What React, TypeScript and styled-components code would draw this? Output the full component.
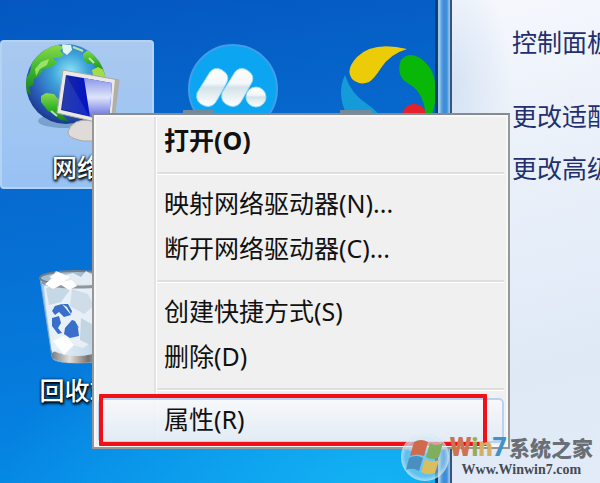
import React from "react";
import styled, { createGlobalStyle } from "styled-components";

const GlobalStyle = createGlobalStyle`
  *, *::before, *::after { box-sizing: border-box; }
  body {
    margin: 0;
    font-family: "Noto Sans", "Noto Sans CJK SC", sans-serif;
  }
`;

const Screen = styled.main`
  position: relative;
  display: grid;
  grid-template-columns: minmax(0, 435fr) 17px minmax(0, 148fr);
  min-height: 100vh;
  overflow: hidden;
`;

const Desktop = styled.section`
  display: grid;
  grid-template-columns: repeat(3, 155px);
  grid-auto-rows: 149px;
  row-gap: 74px;
  align-content: start;
  padding-top: 40px;
  overflow: hidden;
  background:
    radial-gradient(ellipse 380px 190px at 88% 100%, rgba(22, 185, 246, 0.85), rgba(10, 150, 235, 0) 100%),
    linear-gradient(172deg, #0457c0 0%, #0665ca 24%, #0672d6 52%, #0580e0 78%, #0591ea 100%);
`;

const DesktopIcon = styled.button<{ $selected?: boolean }>`
  display: flex;
  flex-direction: column;
  align-items: center;
  width: 154px;
  height: 149px;
  padding: 0;
  border: 2px solid ${(p) => (p.$selected ? "#b4d2f4" : "transparent")};
  border-radius: 4px;
  background: ${(p) => (p.$selected ? "linear-gradient(#a9c9ef, #98c2f4)" : "none")};
`;

const IconArt = styled.svg`
  display: block;
  flex: none;
  width: 150px;
  height: 108px;
`;

const IconLabel = styled.span`
  font: 500 25px/32px "Noto Sans CJK SC", sans-serif;
  color: #fff;
  text-shadow: 0 1px 2px #000, 1px 2px 3px #000, 0 0 3px #001c40;
`;

const Frame = styled.div`
  border-left: 3px solid #10406e;
  border-right: 2px solid #36547c;
  background: linear-gradient(90deg, #9cc8ee 0 2px, #5fa6e2 3px, #3b8bd8 6px, #4291dc 9px, #8fbfea 11px);
`;

const SidePane = styled.nav`
  display: flex;
  flex-direction: column;
  padding: 24px 0 0 60px;
  overflow: hidden;
  background:
    radial-gradient(ellipse 60px 130px at 0 90px, rgba(206, 222, 242, 0.8), transparent),
    linear-gradient(165deg, #f6f8fd 0%, #edf2fa 25%, #e6eef9 50%, #dfe9f6 75%, #e2ebf7 100%);
`;

const TaskLink = styled.a<{ $first?: boolean }>`
  margin-bottom: ${(p) => (p.$first ? "38px" : "16px")};
  font-size: 25px;
  line-height: 36px;
  white-space: nowrap;
  text-decoration: none;
  color: #232f6e;
`;

const Menu = styled.div`
  position: absolute;
  top: 113px;
  left: 92px;
  width: 418px;
  padding: 4px;
  border: 2px solid #979797;
  border-top-color: #858b90;
  background: linear-gradient(90deg, transparent 60px, #e2e3e3 60px 62px, #fff 62px 63px, transparent 63px) #f0f0f0;
  box-shadow: inset 0 0 0 2px #f8f8f8;
`;

const MenuItem = styled.button<{ $bold?: boolean; $active?: boolean }>`
  display: block;
  width: 100%;
  height: 45px;
  padding: 0 0 4px 66px;
  border: 0;
  border-radius: 5px;
  text-align: left;
  font-family: inherit;
  font-size: 25px;
  line-height: 40px;
  font-weight: ${(p) => (p.$bold ? 700 : 400)};
  color: #111;
  background: ${(p) => (p.$active ? "linear-gradient(rgba(248,250,252,.9), rgba(222,233,245,.8))" : "none")};
  box-shadow: ${(p) => (p.$active ? "inset 0 0 0 2px #b9d2ef" : "none")};
`;

const Divider = styled.hr`
  height: 3px;
  margin: 8px 0 7px 59px;
  border: 0;
  border-top: 2px solid #dfdfdf;
  background: #fff;
`;

const ActiveRow = styled.div`
  position: relative;
`;

const RedMark = styled.div`
  position: absolute;
  inset: -4px 17px -3px 1px;
  border: 4px solid #f10f18;
  border-radius: 1px;
  pointer-events: none;
`;

const Watermark = styled.div`
  position: absolute;
  right: 7px;
  bottom: 1px;
  display: flex;
  align-items: center;
`;

const Orb = styled.svg`
  width: 50px;
  height: 50px;
`;

const BrandText = styled.div`
  display: flex;
  flex-direction: column;
  align-items: center;
`;

const BrandName = styled.div`
  display: flex;
  align-items: center;
  font: 900 21px/24px "Noto Sans CJK SC", sans-serif;
  color: #6a6f76;
`;

const Win = styled.b`
  font: 900 25px/24px Roboto, sans-serif;
  margin-right: 2px;
  padding-top: 2px;
`;

const Tint = styled.span<{ $color: string }>`
  color: ${(p) => p.$color};
`;

const BrandUrl = styled.div`
  font: 700 14px/20px "Liberation Serif", serif;
  color: #454b55;
`;

const NetworkArt = () => (
  <IconArt viewBox="3 42 150 108" aria-hidden="true">
    <defs>
      <radialGradient id="sea" cx="55%" cy="35%" r="65%">
        <stop offset="0" stopColor="#8ce6f6" />
        <stop offset=".35" stopColor="#3ea2da" />
        <stop offset=".75" stopColor="#2a5cb8" />
        <stop offset="1" stopColor="#1a3a90" />
      </radialGradient>
      <linearGradient id="land" x1="0" y1="0" x2="0" y2="1">
        <stop offset="0" stopColor="#8edb4a" />
        <stop offset=".5" stopColor="#38b62b" />
        <stop offset="1" stopColor="#168018" />
      </linearGradient>
      <linearGradient id="screen" x1="0" y1="0" x2="1" y2="0">
        <stop offset="0" stopColor="#1a2c98" />
        <stop offset=".5" stopColor="#0414c4" />
        <stop offset="1" stopColor="#1534e0" />
      </linearGradient>
      <linearGradient id="glare" x1="0" y1="0" x2="0" y2="1">
        <stop offset="0" stopColor="#8a98e6" />
        <stop offset=".45" stopColor="#dfe4fb" />
        <stop offset="1" stopColor="#4858d8" />
      </linearGradient>
      <clipPath id="globe"><circle cx="67" cy="84" r="40" /></clipPath>
    </defs>
    <ellipse cx="66" cy="121" rx="27" ry="7" fill="#426c98" opacity=".4" />
    <circle cx="67" cy="84" r="40" fill="url(#sea)" />
    <g clipPath="url(#globe)" fill="url(#land)">
      <path d="M31 72l3-14 10-10 12-4 9 3-4 4 4 4-5 3-6 0 4 5-7 5-7 1-3 6-6 4-1 6-4 2 2 8-4-3-3-10z" />
      <path d="M42 96l5-3 8 1 5 6-1 6 4 8 6 7-8-1-7-7-5-2-7-9z" />
      <path d="M84 54l6-5 14 10 6 12-3 3-7-2-6-8-5 0-5-5z" />
      <path d="M93 70l6-3 6 3 3 8-6-1-8-2z" fill="#a4dc48" />
      <path d="M36 69l6-7 8-3-2 6-7 4-4 7z" fill="#b0e878" opacity=".8" />
      <path d="M63 44l9 1 1 5-5 5-4-3z" fill="#e3f6ee" />
      <path d="M74 47l10 4M90 58l5 5M52 111l6 5" fill="none" stroke="#b8e6a8" strokeWidth="2" />
    </g>
    <path d="M77 122q9-4 25 1v18H84q-16-3-15-9 1-6 8-10z" fill="#dedbd8" stroke="#a9a7a7" strokeWidth="1" />
    <path d="M64 70l56 10-6 46-56-13z" fill="#ebe9e8" stroke="#aaa7a8" strokeWidth="1" />
    <path d="M116 79l4 1-5 45-3-4z" fill="#b4aea9" />
    <path d="M67 75l46 8-3 38-48-11z" fill="url(#screen)" />
    <path d="M85 78l28 5-3 38-19-4z" fill="url(#glare)" />
    <path d="M67 75l23 41-27-7z" fill="#4463d0" opacity=".3" />
  </IconArt>
);

const MxArt = () => (
  <IconArt viewBox="158 42 150 108" aria-hidden="true">
    <defs>
      <linearGradient id="pill" x1="0" y1="0" x2="0" y2="1">
        <stop offset="0" stopColor="#fff" />
        <stop offset=".4" stopColor="#f3f7f9" />
        <stop offset=".5" stopColor="#d3e3e9" />
        <stop offset="1" stopColor="#fff" />
      </linearGradient>
    </defs>
    <circle cx="234" cy="89" r="44" fill="#0ba5f1" stroke="#3f9eea" strokeWidth="2" />
    <g fill="url(#pill)" stroke="#9adaf4" strokeWidth="1">
      <path d="M211 72q5-6 12-2 8 5 5 12l-10 18q-4 8-12 6-10-3-8-13z" />
      <path d="M236 72q5-6 12-2 8 5 5 12l-10 18q-4 8-12 6-10-3-8-13z" />
      <circle cx="257" cy="97" r="10" />
    </g>
    <path d="M184 110h31v31h-31z" fill="#73899c" />
  </IconArt>
);

const PetalArt = () => (
  <IconArt viewBox="313 42 150 108" aria-hidden="true">
    <path d="M346 75q-8 17 0 36 16 27 41 16-5-14-19-23-16-10-22-29z" fill="#159bd7" />
    <path d="M408 49q-34-8-50 8-12 13-5 22 8 7 17 3 5-3 12-14 9-14 26-19z" fill="#eccb08" />
    <path d="M402 60q8-9 19-2 15 11 15 27 3 23-9 41 1-32-17-42-14-8-8-24z" fill="#08b708" />
    <circle cx="415" cy="116" r="12" fill="#e5212b" />
    <path d="M341 110h32v31h-32z" fill="#73899c" />
  </IconArt>
);

const BinArt = () => (
  <IconArt viewBox="3 265 150 108" aria-hidden="true">
    <defs>
      <linearGradient id="bin" x1="0" x2="1">
        <stop offset="0" stopColor="#8fc2e8" />
        <stop offset=".25" stopColor="#e2eef7" />
        <stop offset=".65" stopColor="#c8dced" />
        <stop offset="1" stopColor="#8ab3d6" />
      </linearGradient>
      <linearGradient id="base" x1="0" x2="1">
        <stop offset="0" stopColor="#727980" />
        <stop offset=".35" stopColor="#e4dfd9" />
        <stop offset=".7" stopColor="#77716e" />
        <stop offset="1" stopColor="#cbc9c6" />
      </linearGradient>
    </defs>
    <path d="M41 278l12 79q1 6 25 6t26-6l12-79z" fill="url(#bin)" stroke="#78a6cc" />
    <path d="M52 350q26 12 53 0l-2 8q-7 5-25 5t-25-5z" fill="url(#base)" />
    <ellipse cx="78" cy="278" rx="37" ry="7" fill="#a8bdce" stroke="#747c84" strokeWidth="2" />
    <path d="M45 287l5-6 7-10 9 4 8-2 8 4 5-6 10 6 12 4-5 15-6 42-14 10-16-5-15 10-2-18-4-28z" fill="#e9f0f6" opacity=".92" />
    <path d="M47 288l12-4 12 6-9 12-12 3z" fill="#c6d7e6" />
    <path d="M73 289l16 5 6 12-10 8-14-8z" fill="#cfdde9" />
    <path d="M82 318l14 8-3 20-12-6z" fill="#c3d4e3" />
    <path d="M54 341l12-6 9 10-10 10z" fill="#fbfdff" />
    <path d="M50 277l9-5 12 5-7 5z" fill="#fff" />
    <path d="M43 282q8 5 35 5 29 0 36-5" fill="none" stroke="#8e969d" strokeWidth="3" />
    <path d="M46 284l9-7 8 5 10-2 5 6-8 4-8-5-8 4z" fill="#fff" />
    <g fill="#396fca">
      <path d="M56 306l7-2 9 11-7 2-5-5-4 3-3-4z" />
      <path d="M68 307l-5-3 6 0 4 7-1 3z" />
      <path d="M53 318l7-2 2 7-3 5 4 5-4 1-6-8z" />
      <path d="M66 328l7-8 6 8 1 8-9 2-6-4z" />
      <path d="M73 320l-1 5 8 3-4-7z" />
    </g>
  </IconArt>
);

export default function App() {
  return (
    <>
      <GlobalStyle />
      <Screen>
        <Desktop aria-label="桌面">
          <DesktopIcon $selected>
            <NetworkArt />
            <IconLabel>网络</IconLabel>
          </DesktopIcon>
          <DesktopIcon aria-label="浏览器"><MxArt /></DesktopIcon>
          <DesktopIcon aria-label="应用"><PetalArt /></DesktopIcon>
          <DesktopIcon>
            <BinArt />
            <IconLabel>回收站</IconLabel>
          </DesktopIcon>
        </Desktop>
        <Frame />
        <SidePane>
          <TaskLink href="#home" $first>控制面板</TaskLink>
          <TaskLink href="#adapter">更改适配</TaskLink>
          <TaskLink href="#sharing">更改高级</TaskLink>
        </SidePane>

        <Menu role="menu">
          <MenuItem role="menuitem" $bold>打开(O)</MenuItem>
          <Divider />
          <MenuItem role="menuitem">映射网络驱动器(N)...</MenuItem>
          <MenuItem role="menuitem">断开网络驱动器(C)...</MenuItem>
          <Divider />
          <MenuItem role="menuitem">创建快捷方式(S)</MenuItem>
          <MenuItem role="menuitem">删除(D)</MenuItem>
          <Divider />
          <ActiveRow>
            <MenuItem role="menuitem" $active>属性(R)</MenuItem>
            <RedMark />
          </ActiveRow>
        </Menu>

        <Watermark>
          <Orb viewBox="0 0 50 50" aria-hidden="true">
            <defs>
              <radialGradient id="orb" cx="50%" cy="50%" r="50%">
                <stop offset="0" stopColor="#c4e6f4" stopOpacity=".55" />
                <stop offset=".8" stopColor="#a9d4ea" stopOpacity=".5" />
                <stop offset="1" stopColor="#e0eef5" stopOpacity=".75" />
              </radialGradient>
            </defs>
            <circle cx="25" cy="25" r="24" fill="url(#orb)" />
            <path d="M5 17Q12 2 25 2t20 15Q25 25 5 17z" fill="#fff" opacity=".3" />
            <path d="M14 10q7-4 14 0l-4 14q-7-3-14 0z" fill="#cf6a4c" />
            <path d="M30 11q6 4 13 0l-4 14q-6 4-13 0z" fill="#7fae5c" />
            <path d="M9 26q7-4 14 0l-4 13q-7-4-13-1z" fill="#4a8fc0" />
            <path d="M25 27q6 4 14 1l-4 13q-7 3-14-1z" fill="#d9bd5e" />
          </Orb>
          <BrandText>
            <BrandName>
              <Win>
                <Tint $color="#cf7250">W</Tint>
                <Tint $color="#9aab57">i</Tint>
                <Tint $color="#d5af65">n</Tint>
                <Tint $color="#3f93c9">7</Tint>
              </Win>
              系统之家
            </BrandName>
            <BrandUrl>Www.Winwin7.com</BrandUrl>
          </BrandText>
        </Watermark>
      </Screen>
    </>
  );
}
